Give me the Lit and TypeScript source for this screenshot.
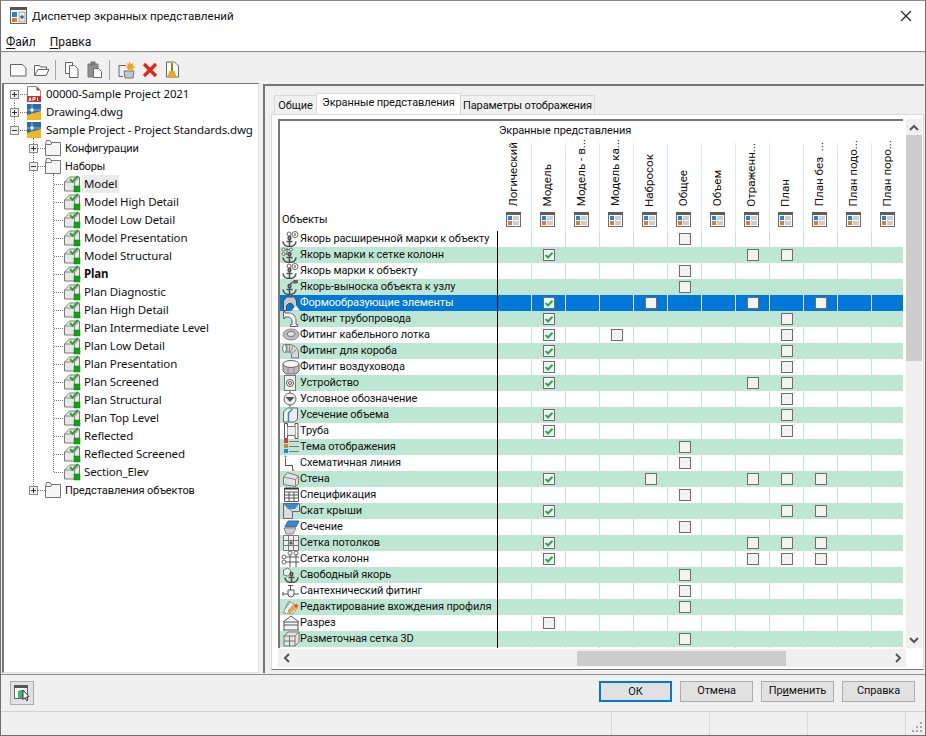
import { LitElement, html, css, svg } from "lit";
import { customElement } from "lit/decorators.js";

const S = "#5f5f5f";
const anchor = svg`<g fill="none" stroke="#4f4f4f" stroke-width="1.6"><circle cx="9.500" cy="7" r="1.400"/><path d="M9.500 8.500V15.500M6.500 10.500h6M3 10.500c.2 3.500 3.500 5 6.500 5s6.300-1.500 6.500-5"/></g>`;
const rowIcons: Record<string, unknown> = {
  a1: svg`${anchor}<g fill="#fff" stroke="#666"><circle cx="9" cy="3" r="2"/><circle cx="15" cy="3.500" r="3"/></g><path d="M15 2v3" stroke="#444"/>`,
  a2: svg`${anchor}<g fill="#fff" stroke="#666"><circle cx="3.500" cy="2.500" r="1.500"/><circle cx="3.500" cy="7" r="1.500"/><circle cx="11" cy="2.500" r="1.500"/></g><path d="M5 2.500h4.500M7 1v7M5 7h2" stroke="#666"/>`,
  a3: svg`${anchor}<path d="M10 5l5-3" stroke="#666" stroke-width="1.500"/><path d="M13 1h5v3l-4 1z" fill="#666"/>`,
  form: svg`<path d="M3.500 15.500V6l3-4h8l2 4v9.500h-3v-5l-2-2h-3l-2 2v5z" fill="#c9c9c9" stroke="#4e4e4e"/><path d="M12 15.500l4-5 3.500 5z" fill="#fff" stroke="#ccc"/>`,
  pipe: svg`<path d="M3.500 .5h1.500v1.500h3c5 0 8 3 8 8v3.500h1.500v2h-7v-2h1.500V10c0-2-2-4-4-4H5v1.500H3.500z" fill="#f7f7f7" stroke="${S}"/><path d="M8 2c5 0 8 4 8 8" fill="none" stroke="#aaa"/>`,
  tray: svg`<ellipse cx="11" cy="7.500" rx="8" ry="5.500" fill="#bdbdbd" stroke="#8a8a8a"/><ellipse cx="11" cy="7" rx="4" ry="2.500" fill="#e5e5e5" stroke="#777"/>`,
  duct: svg`<path d="M4 1.500h5c4 0 9.500 3 9.500 9v4.500h-7v-3c0-2-1-3-3-3H4z" fill="#d7d7d7" stroke="#777"/><path d="M7 2v7M10 2l-1 7M13 3.500l-3 6M16 7l-5 4" stroke="#8a8a8a"/><ellipse cx="4.500" cy="5.500" rx="2" ry="4" fill="#eee" stroke="#777"/>`,
  hvac: svg`<path d="M3 5v7l3 3h10l3-3V5z" fill="#bdbdbd" stroke="#666"/><ellipse cx="11" cy="5" rx="8" ry="3.500" fill="#f4f4f4" stroke="#666"/><path d="M8 9v6M14 9v6" stroke="#888"/>`,
  dev: svg`<rect x="4.500" y=".5" width="11" height="15" fill="#eee" stroke="#777"/><circle cx="10" cy="8" r="3.500" fill="#fff" stroke="#555"/><circle cx="10" cy="8" r="1.500" fill="none" stroke="#555"/>`,
  sym: svg`<path d="M10 0v2M10 14v2" stroke="#555"/><circle cx="10" cy="8" r="6" fill="#eee" stroke="#666"/><path d="M5.500 6h9L10 11z" fill="#555"/>`,
  clip: svg`<path d="M3.500 15V5l4-4h10v11l-3 3z" fill="#eee" stroke="#666"/><path d="M8.500 15V6l4-4" fill="none" stroke="#2a8fd8" stroke-width="1.500"/>`,
  tube: svg`<path d="M4.500 .5h3v15h-3zM15 .5h3v15h-3z" fill="#fff" stroke="#555"/><path d="M7.500 4h7.500v8h-7.500z" fill="#eee"/><path d="M7.500 3.500h7.500M7.500 12.500h7.500" stroke="#777"/>`,
  theme: svg`<rect x="4" y="0" width="4" height="4" fill="#e53a2f"/><rect x="4" y="5" width="4" height="4" fill="#d9822b"/><rect x="4" y="10" width="4" height="4" fill="#1f87d6"/><path d="M9 2.500h10M9 7.500h10M9 12.500h10" stroke="#777"/>`,
  schem: svg`<circle cx="5.500" cy="1.500" r="1" fill="#1f87d6"/><path d="M5.500 3v7.500h7v4" fill="none" stroke="#555"/><rect x="12" y="14" width="2" height="2" fill="#c98a2b"/>`,
  wall: svg`<path d="M3.500 6l4-4.500 11 3.500v7.500l-3 3-12-2z" fill="#e2e2e2" stroke="#777"/><path d="M3.500 6l12 2.500 3-3.500M15.500 8.500V15.500" fill="none" stroke="#888"/>`,
  sched: svg`<path d="M4.500 1.500h14v13h-14zM4.500 5h14M4.500 8h14M4.500 11h14M9 5v9.500M14 5v9.500" fill="#fff" stroke="#555"/><path d="M4.500 1.500h14" stroke="#333" stroke-width="2"/>`,
  roof: svg`<path d="M3.500 .5h16v8h-7v7h-9z" fill="#ddd" stroke="#666"/><path d="M4 1h15l-4 5H8z" fill="#2a8fd8"/><path d="M3.500 .5l9 8" stroke="#777"/>`,
  cut: svg`<path d="M8 2h11l-3 6H5z" fill="#3f87c9" stroke="#2f6a9f"/><path d="M4 9h12l-3 6H6z" fill="#cfcfcf" stroke="#888"/>`,
  ceil: svg`<path d="M3.500 .5h15v15h-15zM8.500 .5v15M13.500 .5v15M3.500 5.500h15M3.500 10.500h15" fill="#eee" stroke="#777"/><rect x="9.500" y="6.500" width="3" height="3" fill="#555"/>`,
  colg: svg`<g fill="#fff" stroke="#666"><circle cx="10" cy="2" r="2"/><circle cx="16" cy="2" r="2"/><circle cx="4" cy="6" r="2"/><circle cx="4" cy="11" r="2"/></g><path d="M6 6h13M6 11h13M10 4v12M16 4v12" stroke="#555"/>`,
  free: svg`<path d="M3.500 3l4-2 3 2v4l-3 2-4-1z" fill="#eee" stroke="#777"/><g transform="translate(2 0)">${anchor}</g>`,
  plumb: svg`<path d="M3 9v4M3 11h5M14 11h5M10.500 2v5M8 2.500h5" stroke="#555" fill="none"/><path d="M8 7v4a3 3 0 0 0 6 0V7z" fill="none" stroke="#555"/>`,
  prof: svg`<path d="M3 14l6-12 9 6-5 7z" fill="#eee" stroke="#666" stroke-dasharray="1.500 1"/><path d="M5 10l5-7M8 12l6-7" stroke="#888"/><path d="M7 15l2-4 8-7 2 3-8 7z" fill="#f2a53a"/><circle cx="16" cy="7" r="1.500" fill="#e53a2f"/>`,
  sect: svg`<path d="M3 7l8-6 8 6M4 15V7h14v8M3 15h16M4 10h14" fill="#f5f5f5" stroke="#555"/>`,
  g3d: svg`<path d="M4 5l4-4h11v10l-4 4H4z" fill="#e4e4e4" stroke="#777"/><path d="M4 5h11v10M15 5l4-4M9.500 5v10M4 10h11" fill="none" stroke="#777"/>`,
};

const rows: [string, string, number[], number[]][] = [
  ["a1", "Якорь расширенной марки к объекту", [], [5]],
  ["a2", "Якорь марки к сетке колонн", [1], [7, 8]],
  ["a1", "Якорь марки к объекту", [], [5]],
  ["a3", "Якорь-выноска объекта к узлу", [], [5]],
  ["form", "Формообразующие элементы", [1], [4, 7, 9]],
  ["pipe", "Фитинг трубопровода", [1], [8]],
  ["tray", "Фитинг кабельного лотка", [1], [3, 8]],
  ["duct", "Фитинг для короба", [1], [8]],
  ["hvac", "Фитинг воздуховода", [1], [8]],
  ["dev", "Устройство", [1], [7, 8]],
  ["sym", "Условное обозначение", [], [8]],
  ["clip", "Усечение объема", [1], [8]],
  ["tube", "Труба", [1], [8]],
  ["theme", "Тема отображения", [], [5]],
  ["schem", "Схематичная линия", [], [5]],
  ["wall", "Стена", [1], [4, 7, 8, 9]],
  ["sched", "Спецификация", [], [5]],
  ["roof", "Скат крыши", [1], [8, 9]],
  ["cut", "Сечение", [], [5]],
  ["ceil", "Сетка потолков", [1], [7, 8, 9]],
  ["colg", "Сетка колонн", [1], [7, 8, 9]],
  ["free", "Свободный якорь", [], [5]],
  ["plumb", "Сантехнический фитинг", [], [5]],
  ["prof", "Редактирование вхождения профиля", [], [5]],
  ["sect", "Разрез", [], [1]],
  ["g3d", "Разметочная сетка 3D", [], [5]],
  ["", "", [], []],
];

const cols = ["Логический", "Модель", "Модель - в...", "Модель ка...", "Набросок", "Общее", "Объем", "Отраженн...", "План", "План без\u00a0\u00a0...", "План подо...", "План поро..."];

const sets = ["Model", "Model High Detail", "Model Low Detail", "Model Presentation", "Model Structural", "Plan", "Plan Diagnostic", "Plan High Detail", "Plan Intermediate Level", "Plan Low Detail", "Plan Presentation", "Plan Screened", "Plan Structural", "Plan Top Level", "Reflected", "Reflected Screened", "Section_Elev"];

const dots = (x1: number, y1: number, x2: number, y2: number) =>
  svg`<line x1=${x1} y1=${y1} x2=${x2} y2=${y2} stroke="#777" stroke-dasharray="1 1"/>`;
const expander = (x: number, open: boolean) => svg`
  <rect x=${x - 4} y="5.500" width="8" height="8" fill="#efefef" stroke="#8c8c8c"/>
  <path d=${open ? `M${x - 2.5} 9.500h5` : `M${x - 2.5} 9.500h5M${x} 7v5`} stroke="#333"/>`;

const fileIcon = (kind: string, x: number) =>
  kind === "pdf"
    ? svg`<g transform="translate(${x} 1)"><path d="M.5 .5h9l4 4v7H.5z" fill="#fff" stroke="#888"/><path d="M9.500 .5l4 4h-4z" fill="#d42a2a"/><rect x="0" y="10" width="14" height="6" fill="#c9302c"/><path d="M2 15l1-3.500 1 3.500M6 11.500v3.500M6 11.500h2v2H6M10.500 11.500v3.500" stroke="#fff" fill="none"/></g>`
    : svg`<g transform="translate(${x} 1)"><rect y="0" width="14" height="16" fill="#2b6ca8"/><path d="M0 11l14-4v9H0z" fill="#f3b71f"/><path d="M0 6h14M5 0v10" stroke="#a9c9e8" stroke-width=".8"/><rect x="3.500" y="4.500" width="3" height="3" fill="#fff"/></g>`;
const folderIcon = (x: number) => svg`<path transform="translate(${x} 0)" d="M.5 5.500v11h15v-13H6l-1-2H1.500z" fill="#f6f6f6" stroke="#777"/><path transform="translate(${x} 0)" d="M.5 5.500H6l1-2" fill="none" stroke="#777"/>`;
const setIcon = (x: number) => svg`<g transform="translate(${x} 0)"><path d="M.5 7l5-5h10v14h-15z" fill="#e8e8e8" stroke="#7a7a7a"/><path d="M.5 7h10v9M10.500 7l5-5" fill="none" stroke="#8a8a8a"/><path d="M6 4l2.500 2.800L14 1" fill="none" stroke="#2da52d" stroke-width="2"/><rect x="10" y="11" width="6" height="6" fill="#12a312" stroke="#0c7d0c" stroke-width=".5"/></g>`;

const colIcon = html`<svg class="colicon" width="15" height="15" viewBox="0 0 15 15"><rect x=".5" y=".5" width="14" height="14" fill="#fff" stroke="#6c6c6c"/><rect width="15" height="3" fill="#5d5d5d"/><rect x="2" y="4" width="4" height="4" fill="#1e84d8"/><rect x="2" y="9" width="4" height="4" fill="#de7a2a"/><path d="M7 5h6M7 7h6M7 10h6M7 12h6" stroke="#9a9a9a"/></svg>`;

const tb = (d: unknown, w = 17) => html`<svg class="tbi" width=${w} height="18" viewBox="0 0 ${w} 18">${d}</svg>`;

@customElement("app-root")
export class AppRoot extends LitElement {
  static styles = css`
    :host { display: block; width: 926px; height: 736px; font: 11px/16px Roboto, "Noto Sans", sans-serif; letter-spacing: -0.1px; color: #111; }
    * { box-sizing: border-box; }
    .win { width: 926px; height: 736px; display: flex; flex-direction: column; background: #f0f0f0; border: 1px solid #6f6f6f; border-top-color: #8a8a8a; }
    .title { height: 29px; background: #fff; display: flex; align-items: center; padding: 0 13px 0 9px; gap: 5px; font-size: 11.6px; letter-spacing: 0; }
    .title span { flex: 1; padding-top: 1px; }
    .menu { height: 21px; background: #fff; display: flex; gap: 14px; padding: 4px 5px 0; font-size: 12px; letter-spacing: 0; }
    .menu u { text-underline-offset: 2px; }
    .rule { height: 2px; background: #8c8c8c; border-bottom: 1px solid #e4e4e4; flex: none; }
    .toolbar { height: 31px; flex: none; display: flex; align-items: center; padding: 2px 0 0 9px; }
    .tbi { display: block; margin-right: 6px; flex: none; }
    .tsep { width: 1px; height: 20px; background: #a5a5a5; margin: 0 8px 0 -1px; flex: none; }
    .main { height: 590px; flex: none; display: flex; padding: 0 2px 0 1px; }
    .tree { width: 257px; height: 590px; margin-top: -1px; flex: none; background: #fff; border-left: 2px solid #777; border-top: 1px solid #777; border-right: 1px solid #e2e2e2; border-bottom: 1px solid #e2e2e2; padding-top: 1px; }
    .trow { height: 18px; display: flex; align-items: center; white-space: nowrap; }
    .trow svg { flex: none; display: block; }
    .tlabel { padding: 0 2px; line-height: 20px; height: 18px; }
    .tlabel.lat { font: 11.5px/18px "Noto Sans", sans-serif; letter-spacing: -0.13px; }
    .tlabel.sel { background: #ebebeb; }
    .tlabel.bold { font-weight: 700; }
    .right { width: 661px; margin-left: 4px; flex: none; border-left: 2px solid #777; border-top: 2px solid #777; padding: 7px 0 0 6px; height: 589px; }
    .tabs { display: flex; height: 21px; align-items: flex-end; padding-left: 3px; }
    .tab { height: 19px; padding: 2px 0 0; background: #f0f0f0; border: 1px solid #dadada; border-bottom: 0; text-align: center; margin-left: -1px; }
    .tab.t1 { width: 43px; margin-left: 0; }
    .tab.t2 { width: 145px; height: 21px; background: #fff; padding-top: 1px; position: relative; z-index: 1; }
    .tab.t3 { width: 135px; }
    .pane { width: 653px; height: 556px; background: #fff; border: 1px solid #dadada; border-bottom: 1px solid #777; padding: 4px 0 0 6px; }
    .tablebox { display: grid; grid-template-columns: 625px 19px; grid-template-rows: 529px 20px; width: 644px; }
    .grid { border-left: 2px solid #777; border-top: 2px solid #777; overflow: hidden; position: relative; background: #fff; }
    .head { display: grid; grid-template-columns: 218px repeat(12, 34px); height: 110px; width: 626px; }
    .objs { grid-row: 1 / 3; align-self: end; padding: 0 0 3px 2px; }
    .views { grid-column: 2 / -1; height: 20px; line-height: 20px; padding: 0 0 0 1px; }
    .hc { height: 87px; border-right: 1px solid #dcebe4; display: flex; flex-direction: column; align-items: center; justify-content: flex-end; padding-bottom: 3px; width: 34px; padding-right: 2px; }
    .vt { writing-mode: vertical-rl; transform: rotate(180deg); white-space: nowrap; line-height: 14px; margin: 0 1px 5px 0; font-size: 11.6px; letter-spacing: 0; }
    .colicon { display: block; flex: none; }
    .row { display: grid; grid-template-columns: 218px repeat(12, 34px); height: 16px; width: 626px; }
    .row.g { background: #bee6d5; }
    .row.s { background: #0078d7; color: #fff; }
    .name { display: flex; align-items: center; border-right: 1px solid #000; white-space: nowrap; overflow: hidden; }
    .name svg { flex: none; display: block; }
    .cell { border-right: 1px solid #c4e3d6; display: flex; align-items: center; justify-content: center; padding-left: 1px; }
    .row.g .cell { border-right-color: #bee6d5; }
    .row.s .cell { border-right-color: #d6ecfa; }
    .chk { width: 12px; height: 12px; background: #f3f3f3; border: 1px solid #6d6d6d; display: block; }
    .sb { background: #f0f0f0; display: flex; position: relative; }
    .sb.v { flex-direction: column; align-items: center; margin-left: 3px; width: 16px; }
    .sb.h { align-items: center; grid-column: 1 / 3; margin: 1px 16px 0 0; height: 18px; }
    .arr { flex: none; display: flex; align-items: center; justify-content: center; }
    .sb.v .arr { height: 16px; width: 16px; }
    .sb.v .thumb { height: 226px; width: 16px; background: #cdcdcd; }
    .sb.v .fill { flex: 1; }
    .sb.h .arr { width: 16px; height: 16px; }
    .sb.h .fill1 { width: 283px; flex: none; }
    .sb.h .thumb { width: 209px; height: 15px; background: #cdcdcd; flex: none; }
    .sb.h .fill2 { flex: 1; }
    .actions { flex: none; border-top: 1px solid #8f8f8f; border-bottom: 1px solid #d2d2d2; display: flex; align-items: center; padding: 0 10px 1px 9px; height: 38px; }
    .iconbtn { width: 24px; height: 24px; border: 1px solid #adadad; background: #e1e1e1; display: flex; align-items: center; justify-content: center; }
    .sp { flex: 1; }
    .btn { width: 73px; height: 21px; border: 1px solid #adadad; background: #e1e1e1; text-align: center; line-height: 18px; margin: 0 0 2px 8px; color: #111; }
    .btn.ok { border: 2px solid #0078d7; line-height: 17px; }
    .status { flex: 1; display: flex; justify-content: flex-end; }
    .st { width: 98px; border-left: 1px solid #d9d9d9; flex: none; }
    .st.last { width: 20px; position: relative; }
    .grip { position: absolute; right: 2px; bottom: 2px; }
  `;

  private treeRows() {
    const out: unknown[] = [];
    const top = (name: string, kind: string, open: boolean, last: boolean) => html`<div class="trow"><svg width="40" height="18">
      ${dots(10.5, out.length === 0 ? 9 : 0, 10.5, last ? 9 : 18)}${dots(14, 9.5, 23, 9.5)}${expander(10.5, open)}${fileIcon(kind, 23)}
      ${last ? dots(29.5, 17, 29.5, 18) : ""}</svg><span class="tlabel lat">${name}</span></div>`;
    out.push(top("00000-Sample Project 2021", "pdf", false, false));
    out.push(top("Drawing4.dwg", "dwg", false, false));
    out.push(top("Sample Project - Project Standards.dwg", "dwg", true, true));
    const branch = (name: string, open: boolean, last: boolean) => html`<div class="trow"><svg width="59" height="18">
      ${dots(29.5, 0, 29.5, last ? 9 : 18)}${dots(34, 9.500, 41, 9.500)}${expander(29.5, open)}${folderIcon(41)}
      ${open ? dots(49.5, 17, 49.5, 18) : ""}</svg><span class="tlabel">${name}</span></div>`;
    out.push(branch("Конфигурации", false, false));
    out.push(branch("Наборы", true, false));
    sets.forEach((n, i) => {
      const last = i === sets.length - 1;
      out.push(html`<div class="trow"><svg width="78" height="18">
        ${dots(29.5, 0, 29.5, 18)}${dots(49.5, 0, 49.5, last ? 9 : 18)}${dots(50, 9.500, 60, 9.500)}${setIcon(60)}
        </svg><span class="tlabel lat ${i === 0 ? "sel" : ""} ${n === "Plan" ? "bold" : ""}">${n}</span></div>`);
    });
    out.push(branch("Представления объектов", false, true));
    return out;
  }

  render() {
    return html`<div class="win">
      <div class="title">
        <svg width="17" height="17" viewBox="0 0 17 17"><rect x=".5" y=".5" width="16" height="16" fill="#fff" stroke="#666"/><rect width="17" height="3" fill="#555"/><rect x="2" y="5" width="5" height="5" fill="#1e84d8"/><rect x="2" y="11" width="5" height="4" fill="#de7a2a"/><rect x="9" y="5" width="6" height="10" fill="#e8e8e8" stroke="#777" stroke-width=".6"/><path d="M10 10h4M12 8v4" stroke="#333"/></svg>
        <span>Диспетчер экранных представлений</span>
        <svg width="12" height="12" viewBox="0 0 12 12"><path d="M1 1l10 10M11 1L1 11" stroke="#222" stroke-width="1.100"/></svg>
      </div>
      <div class="menu"><span><u>Ф</u>айл</span><span><u>П</u>равка</span></div>
      <div class="rule"></div>
      <div class="toolbar">
        ${tb(svg`<path d="M.5 3.500h12l3.500 3.500v8H.5z" fill="#fbfbfb" stroke="#666"/>`)}
        ${tb(svg`<path d="M1.500 14.500V4.500h5l1 1.500h6v2.500" fill="#fbfbfb" stroke="#666"/><path d="M1.500 14.500L5 8.500h11l-3 6z" fill="#fbfbfb" stroke="#666"/>`)}
        <div class="tsep"></div>
        ${tb(svg`<path d="M1.500 1.500h7v11h-7z" fill="#fff" stroke="#666"/><path d="M5.500 4.500h5l3.500 3.500v8.500H5.500z" fill="#fff" stroke="#666"/>`)}
        ${tb(svg`<path d="M1 3h10v13H1z" fill="#8f8f8f" stroke="#777"/><rect x="3.500" y=".5" width="5" height="4" fill="#777"/><path d="M6.500 7.500h5l3 3v6h-8z" fill="#fff" stroke="#666"/>`)}
        <div class="tsep"></div>
        ${tb(svg`<path d="M1 4.500h7M1 4.500v11h4" fill="none" stroke="#666"/><path d="M6 10h10l-1 7H7z" fill="#bcc9d2" stroke="#777"/><path d="M11.500 0l1.200 3 3-1-1 3 3 1-3 1 .8 2.500-3-1.200-2.500 1.200-.5-2.500L7 6l2.800-1-.8-3 2 1z" fill="#f3a416"/>`, 18)}
        ${tb(svg`<path d="M2 3l12 12M14 3L2 15" stroke="#e1251b" stroke-width="3.200"/>`)}
        ${tb(svg`<path d="M1.500 1h8l4 4v11h-12z" fill="#fff" stroke="#666"/><path d="M7 2v8" stroke="#a67a2a" stroke-width="2"/><path d="M2.500 16l2-6h5l2 6z" fill="#f3a416"/>`)}
      </div>
      <div class="main">
        <div class="tree">${this.treeRows()}</div>
        <div class="right">
          <div class="tabs"><div class="tab t1">Общие</div><div class="tab t2">Экранные представления</div><div class="tab t3">Параметры отображения</div></div>
          <div class="pane"><div class="tablebox">
            <div class="grid">
              <div class="head">
                <div class="objs">Объекты</div>
                <div class="views">Экранные представления</div>
                ${cols.map((c) => html`<div class="hc"><span class="vt">${c}</span>${colIcon}</div>`)}
              </div>
              ${rows.map((r, i) => html`<div class="row ${i === 4 ? "s" : i % 2 ? "g" : ""}">
                <div class="name">${r[0] ? html`<svg width="20" height="16" viewBox="0 0 20 16">${rowIcons[r[0]]}</svg>` : ""}${r[1]}</div>
                ${cols.map((_, c) => html`<div class="cell">
                  ${r[2].includes(c) ? html`<svg class="chk" viewBox="0 0 10 10"><path d="M1.500 5l2.500 2.500L8.500 2.800" fill="none" stroke="#1fae54" stroke-width="2"/></svg>`
                  : r[3].includes(c) ? html`<span class="chk"></span>` : ""}
                </div>`)}
              </div>`)}
            </div>
            <div class="sb v">
              <div class="arr"><svg width="10" height="7"><path d="M1 6l4-4 4 4" fill="none" stroke="#555" stroke-width="2"/></svg></div>
              <div class="thumb"></div><div class="fill"></div>
              <div class="arr"><svg width="10" height="7"><path d="M1 1l4 4 4-4" fill="none" stroke="#555" stroke-width="2"/></svg></div>
            </div>
            <div class="sb h">
              <div class="arr"><svg width="7" height="10"><path d="M6 1L2 5l4 4" fill="none" stroke="#555" stroke-width="2"/></svg></div>
              <div class="fill1"></div><div class="thumb"></div><div class="fill2"></div>
              <div class="arr"><svg width="7" height="10"><path d="M1 1l4 4-4 4" fill="none" stroke="#555" stroke-width="2"/></svg></div>
            </div>
          </div></div>
        </div>
      </div>
      <div class="actions">
        <div class="iconbtn"><svg width="16" height="18" viewBox="0 0 16 18"><rect x=".5" y="1.500" width="13" height="13" fill="#fff" stroke="#666"/><rect y="1" width="14" height="3" fill="#555"/><path d="M4 7l3-1h2v8H4z" fill="#3fb56f"/><path d="M9 6l6 6.500-2.500.5 1.500 3-1.500.5-1.500-3-2 2z" fill="#fff" stroke="#333"/></svg></div>
        <div class="sp"></div>
        <div class="btn ok">ОК</div><div class="btn">Отмена</div><div class="btn">Пр<u>и</u>менить</div><div class="btn">Справка</div>
      </div>
      <div class="status">
        <div class="st"></div><div class="st"></div><div class="st"></div>
        <div class="st last"><svg class="grip" width="11" height="11" viewBox="0 0 11 11"><g fill="#a8a8a8"><rect x="8" y="0" width="2" height="2"/><rect x="4" y="4" width="2" height="2"/><rect x="8" y="4" width="2" height="2"/><rect x="0" y="8" width="2" height="2"/><rect x="4" y="8" width="2" height="2"/><rect x="8" y="8" width="2" height="2"/></g></svg></div>
      </div>
    </div>`;
  }
}
